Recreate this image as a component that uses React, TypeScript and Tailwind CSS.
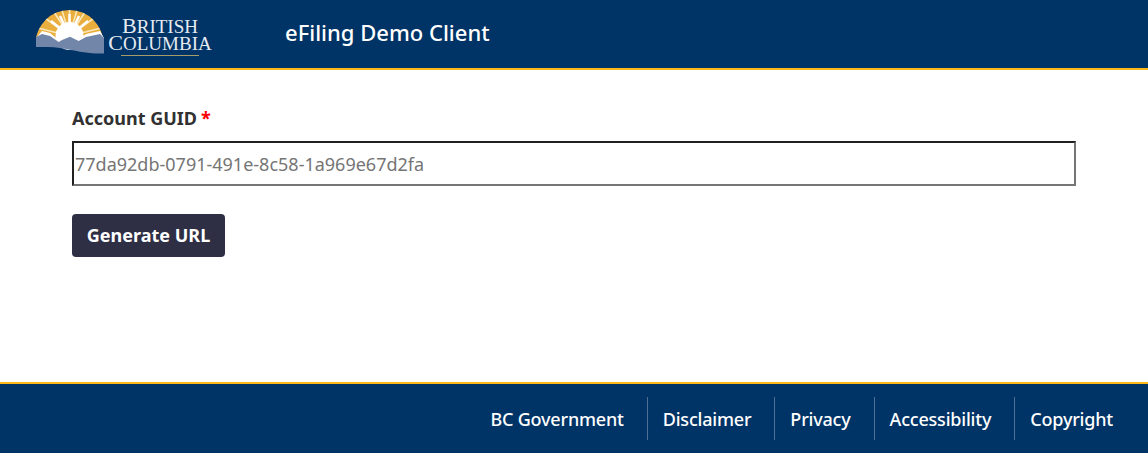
const footerLinks = ['BC Government', 'Disclaimer', 'Privacy', 'Accessibility', 'Copyright'];

function Logo() {
  return (
    <div className="flex items-start">
      <svg width="68" height="45" viewBox="0 0 68 45" className="mt-[1px] block shrink-0">
        <defs>
          <clipPath id="sun">
            <circle cx="33.500" cy="34" r="34" />
          </clipPath>
        </defs>
        <g clipPath="url(#sun)">
          <rect x="0" y="0" width="68" height="32" fill="#e9ae3d" />
          <g stroke="#f9e7b8" strokeWidth="1.600">
            <path d="M33.500 26 L33.500 0 M33.500 26 L26 0 M33.500 26 L41 0 M33.500 26 L18 2 M33.500 26 L49 2 M33.500 26 L9 8 M33.500 26 L58 8 M33.500 26 L2 18 M33.500 26 L65 18" />
          </g>
          <g stroke="#fff" strokeWidth="2.500">
            <path d="M33.500 26 L33.500 4 M33.500 26 L24 6 M33.500 26 L43 6 M33.500 26 L15 11 M33.500 26 L52 11" />
          </g>
          <circle cx="33.500" cy="26" r="14" fill="#ffffff" />
        </g>
        <path d="M0 28 L6 21 L14 23 L22.700 30 L26 28 L34 23 L42.700 29 L50 24 L64 21 L68 28 L68 34 L0 34 Z" fill="#ffffff" />
        <path d="M0 27 L6 24 L14 26 L22.700 32 L26 30 L34 26.700 L42.700 31 L50 27 L64 24 L68 28 L68 43.500 C55 44 45 42 30 39 C18 36.500 8 37 0 37 Z" fill="#7186a9" />
      </svg>
      <div className="flex w-[107px] flex-col items-center pl-[5px] font-['Liberation_Serif',serif] text-[#e6ebf1]">
        <span className="mt-[8px] h-[17px] text-[19px] leading-[17px] whitespace-nowrap"><span className="text-[22px]">B</span>RITISH</span>
        <span className="h-[17px] text-[19px] leading-[17px] whitespace-nowrap"><span className="text-[22px]">C</span>OLUMBIA</span>
        <span className="mt-[4px] h-px w-[78px] bg-[#a89b6a]" />
      </div>
    </div>
  );
}

export default function App() {
  return (
    <div className="flex h-[453px] flex-col bg-white font-['Noto_Sans',sans-serif]">
      <header className="flex h-[70px] shrink-0 items-start border-b-2 border-[#fcba19] bg-[#003366] pl-[36px]">
        <div className="pt-[9px]">
          <Logo />
        </div>
        <h1 className="ml-[74px] pt-[17px] text-[22px] leading-[30px] font-medium text-white">eFiling Demo Client</h1>
      </header>

      <main className="flex-1 px-[72px] pt-[36px]">
        <label className="flex h-[24px] items-center text-[18px] font-bold text-[#313132]">
          Account GUID
          <span className="ml-[4px] text-[red]">*</span>
        </label>
        <input
          readOnly
          value="77da92db-0791-491e-8c58-1a969e67d2fa"
          className="mt-[11px] block h-[45px] w-[1004px] border-2 border-t-[#212121] border-r-[#757575] border-b-[#757575] border-l-[#212121] px-[1px] text-[18px] text-[#757575] outline-none"
        />
        <button className="mt-[28px] block h-[43px] w-[153px] rounded-[4px] bg-[#2e2e45] text-[18px] font-bold text-white">
          Generate URL
        </button>
      </main>

      <footer className="flex h-[71px] shrink-0 items-center justify-end border-t-2 border-[#fcba19] bg-[#003366] pr-[12px]">
        {footerLinks.map((link, i) => (
          <a
            key={link}
            className={`flex h-[43px] items-center pt-[2px] pr-[23px] pl-[15px] text-[18px] font-medium tracking-[-0.2px] text-white ${i > 0 ? 'border-l border-[#4d7094]' : ''}`}
          >
            {link}
          </a>
        ))}
      </footer>
    </div>
  );
}
